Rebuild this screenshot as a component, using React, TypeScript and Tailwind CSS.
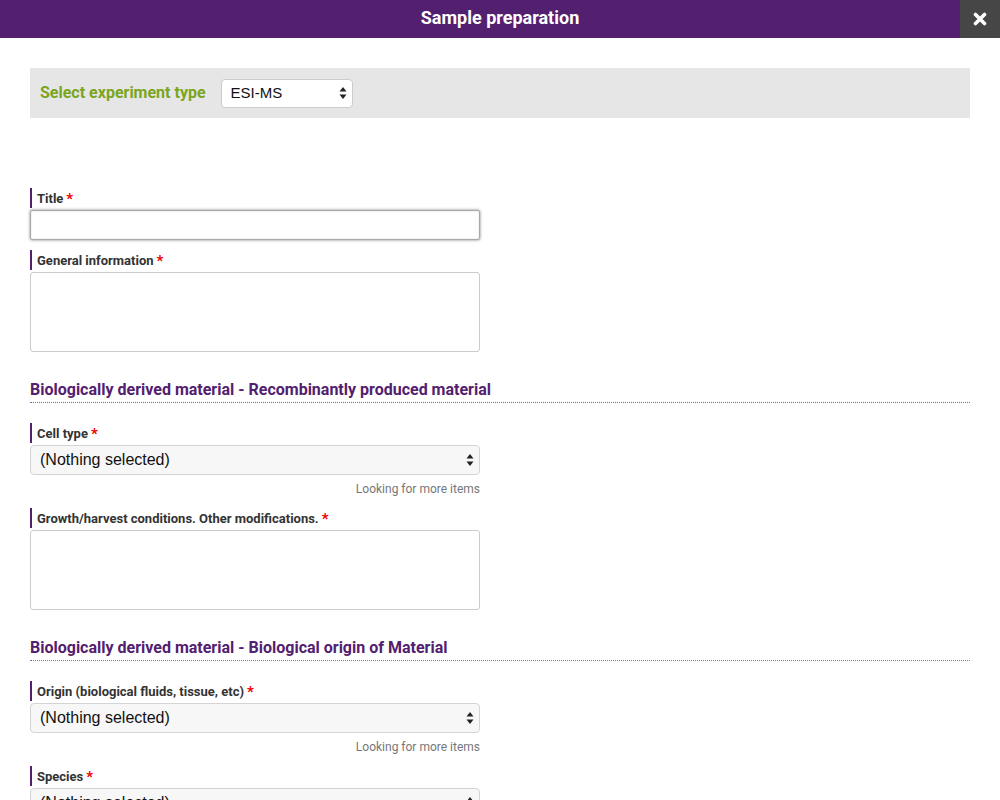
import React from "react";

const Arrows = () => (
  <svg width="8" height="14" viewBox="0 0 8 14" className="shrink-0">
    <path d="M4 1 L7.5 5.5 L0.5 5.5 Z" fill="#222" />
    <path d="M4 13 L7.5 8.5 L0.5 8.5 Z" fill="#222" />
  </svg>
);

const Label = ({ text }: { text: string }) => (
  <div className="h-[20px] border-l-2 border-[#52206f] pl-[5px] pt-[2px] flex items-center text-[13px] font-bold text-[#333] font-['Roboto',sans-serif]">
    {text}
    <span className="text-[#e00] ml-[3px] text-[15px] leading-none">*</span>
  </div>
);

const Select = ({ text }: { text: string }) => (
  <div className="mt-[2px] h-[30px] w-[450px] rounded-[4px] border border-[#d4d4d4] bg-[#f7f7f7] flex items-center justify-between pl-[9px] pr-[5px] font-['Liberation_Sans',Arial,sans-serif] text-[16px] text-[#111]">
    <span>{text}</span>
    <Arrows />
  </div>
);

const More = () => (
  <div className="w-[450px] text-right text-[12px] text-[#777] font-['Roboto',sans-serif] mt-[7px] h-[14px] leading-[14px]">
    Looking for more items
  </div>
);

const Textarea = () => (
  <div className="mt-[2px] h-[80px] w-[450px] rounded-[3px] border border-[#ccc] bg-white" />
);

const Heading = ({ text }: { text: string }) => (
  <div className="border-b border-dotted border-[#9b59b6] pt-[1px] pb-[2px] text-[16px] leading-[20px] font-bold text-[#52206f] font-['Roboto',sans-serif]">
    {text}
  </div>
);

export default function App() {
  return (
    <div className="w-[1000px] h-[800px] overflow-hidden bg-white font-['Roboto',sans-serif]">
      <div className="h-[38px] bg-[#52206f] flex relative">
        <div className="flex-1 flex items-center justify-center text-white font-bold text-[18px] pb-[3px]">
          Sample preparation
        </div>
        <div className="absolute right-0 top-0 w-[40px] h-[38px] bg-[#464646] flex items-center justify-center">
          <svg width="14" height="14" viewBox="0 0 14 14">
            <path d="M2.5 2.5 L11.5 11.5 M11.5 2.5 L2.5 11.5" stroke="white" strokeWidth="3.6" strokeLinecap="round" />
          </svg>
        </div>
      </div>
      <div className="px-[30px]">
        <div className="mt-[30px] h-[50px] bg-[#e6e6e6] flex items-center pl-[10px]">
          <span className="text-[#7aa51d] font-bold text-[16px]">Select experiment type</span>
          <div className="ml-[15px] h-[29px] w-[132px] rounded-[4px] border border-[#ccc] bg-white flex items-center justify-between pl-[9px] pr-[5px] font-['Liberation_Sans',Arial,sans-serif] text-[15px] text-[#111]">
            <span>ESI-MS</span>
            <Arrows />
          </div>
        </div>

        <div className="mt-[70px]">
          <Label text="Title" />
          <div className="mt-[2px] h-[30px] w-[450px] rounded-[2px] border border-[#a9a9a9] shadow-[0_0_3px_rgba(0,0,0,0.5),inset_0_0_2px_rgba(0,0,0,0.15)] bg-white" />
        </div>
        <div className="mt-[10px]">
          <Label text="General information" />
          <Textarea />
        </div>

        <div className="mt-[27px]">
          <Heading text="Biologically derived material - Recombinantly produced material" />
        </div>
        <div className="mt-[20px]">
          <Label text="Cell type" />
          <Select text="(Nothing selected)" />
          <More />
        </div>
        <div className="mt-[12px]">
          <Label text="Growth/harvest conditions. Other modifications." />
          <Textarea />
        </div>

        <div className="mt-[27px]">
          <Heading text="Biologically derived material - Biological origin of Material" />
        </div>
        <div className="mt-[20px]">
          <Label text="Origin (biological fluids, tissue, etc)" />
          <Select text="(Nothing selected)" />
          <More />
        </div>
        <div className="mt-[12px]">
          <Label text="Species" />
          <Select text="(Nothing selected)" />
        </div>
      </div>
    </div>
  );
}
